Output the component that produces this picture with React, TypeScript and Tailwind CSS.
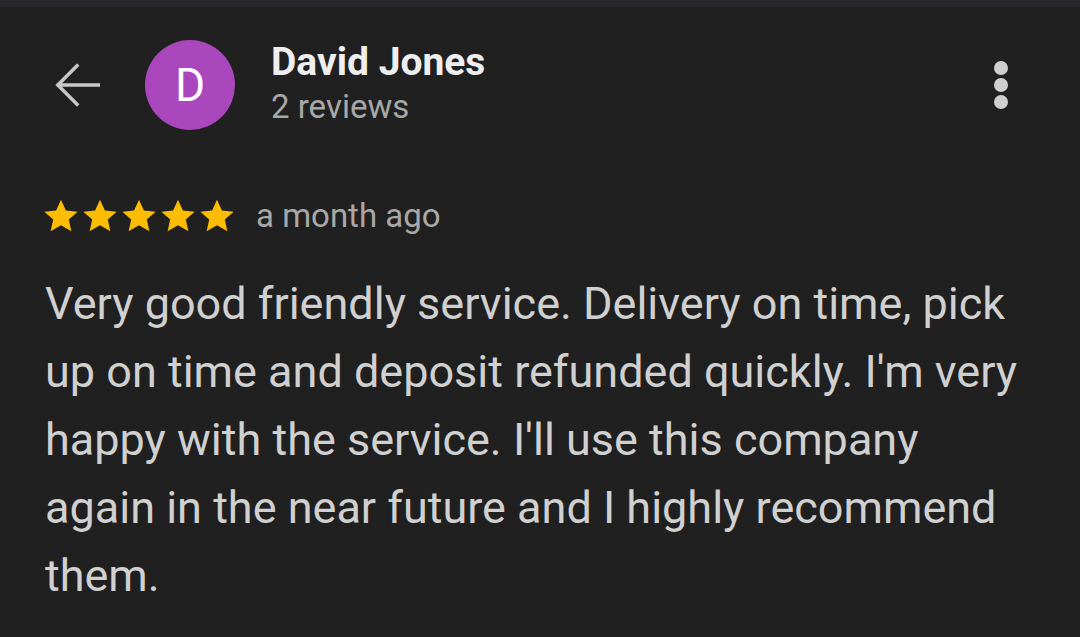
import React from "react";

function Star() {
  return (
    <svg width="34" height="34" viewBox="2 2 20 20" className="block">
      <path
        d="M12 2.5l2.9 6.3 6.9.7-5.2 4.6 1.5 6.8L12 17.4l-6.1 3.5 1.5-6.8-5.2-4.6 6.9-.7z"
        fill="#fbbc04"
      />
    </svg>
  );
}

export default function App() {
  return (
    <div
      className="w-[1080px] h-[637px] bg-[#202020] overflow-hidden flex flex-col"
      style={{ fontFamily: "Roboto, 'Noto Sans', sans-serif" }}
    >
      <div className="h-[7px] bg-[#27272c]" />
      <div className="flex items-center h-[170px] pl-[45px] pr-[72px] -mt-[7px]">
        <svg width="64" height="64" viewBox="0 0 24 24" className="text-[#c8c8c8]">
          <path
            d="M20 12H5M12 4.8 4.8 12 12 19.2"
            fill="none"
            stroke="currentColor"
            strokeWidth="1.3"
            strokeLinecap="square"
          />
        </svg>
        <div className="ml-[36px] w-[90px] h-[90px] rounded-full bg-[#ab47bc] flex items-center justify-center text-white text-[46px] leading-none">
          D
        </div>
        <div className="ml-[36px] self-start mt-[40px] flex flex-col">
          <div className="text-[39px] font-bold text-[#eeeeee] leading-[44px]">David Jones</div>
          <div className="mt-[4px] text-[33px] text-[#a8a8a8] leading-[38px]">2 reviews</div>
        </div>
        <div className="ml-auto flex flex-col gap-[3px] items-center">
          <div className="w-[14px] h-[14px] rounded-full bg-[#cfcfcf]" />
          <div className="w-[14px] h-[14px] rounded-full bg-[#cfcfcf]" />
          <div className="w-[14px] h-[14px] rounded-full bg-[#cfcfcf]" />
        </div>
      </div>
      <div className="flex items-center h-[40px] pl-[44px] mt-[26px]">
        <div className="flex gap-[5px]">
          <Star />
          <Star />
          <Star />
          <Star />
          <Star />
        </div>
        <div className="ml-[22px] text-[33px] text-[#a8a8a8] leading-[40px]">a month ago</div>
      </div>
      <p className="mt-[34px] px-[45px] text-[45px] leading-[68px] text-[#d0d0d0]">
        Very good friendly service. Delivery on time, pick up on time and deposit refunded quickly. I'm very happy with the service. I'll use this company again in the near future and I highly recommend them.
      </p>
    </div>
  );
}
